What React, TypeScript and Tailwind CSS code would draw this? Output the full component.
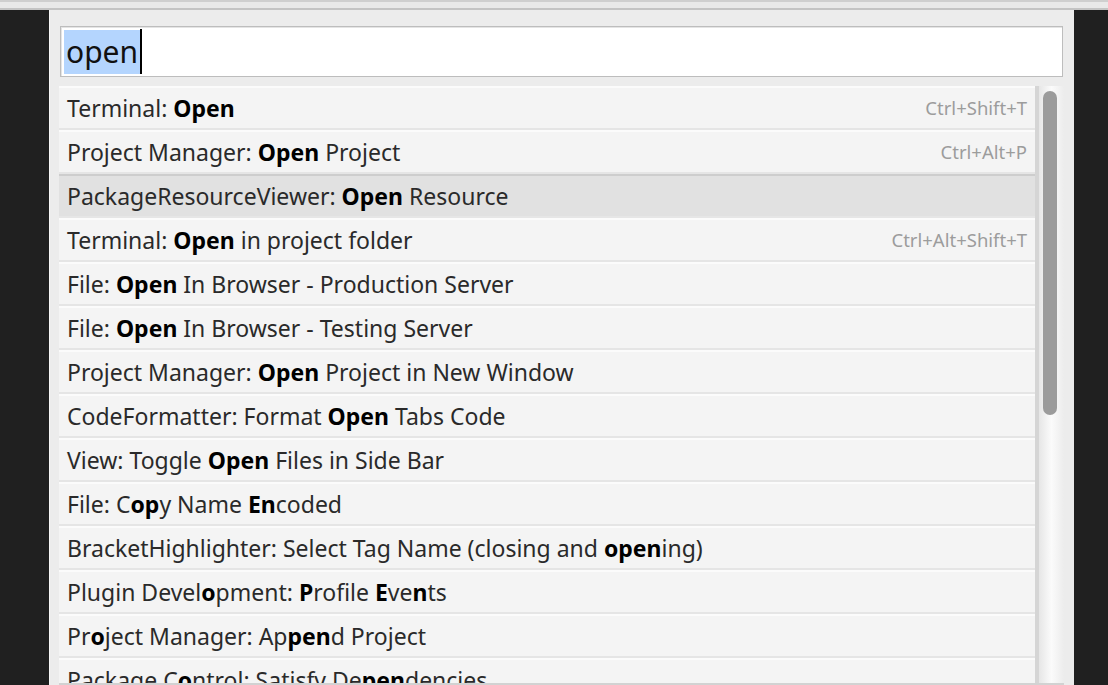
import React from 'react';

type Item = { label: string; keys?: string };

// bracketed parts are the fuzzy-match hits and render bold
const items: Item[] = [
  { label: 'Terminal: [Open]', keys: 'Ctrl+Shift+T' },
  { label: 'Project Manager: [Open] Project', keys: 'Ctrl+Alt+P' },
  { label: 'PackageResourceViewer: [Open] Resource' },
  { label: 'Terminal: [Open] in project folder', keys: 'Ctrl+Alt+Shift+T' },
  { label: 'File: [Open] In Browser - Production Server' },
  { label: 'File: [Open] In Browser - Testing Server' },
  { label: 'Project Manager: [Open] Project in New Window' },
  { label: 'CodeFormatter: Format [Open] Tabs Code' },
  { label: 'View: Toggle [Open] Files in Side Bar' },
  { label: 'File: C[op]y Name [En]coded' },
  { label: 'BracketHighlighter: Select Tag Name (closing and [open]ing)' },
  { label: 'Plugin Devel[o]pment: [P]rofile [E]ve[n]ts' },
  { label: 'Pr[o]ject Manager: Ap[pen]d Project' },
  { label: 'Package C[o]ntrol: Satisfy De[pen]dencies' },
];

const selected = 2;

function Label({ text }: { text: string }) {
  const parts = text.split(/(\[[^\]]+\])/).filter(Boolean);
  return (
    <span>
      {parts.map((p, i) =>
        p.startsWith('[') ? (
          <b key={i} className="font-bold text-black">
            {p.slice(1, -1)}
          </b>
        ) : (
          <span key={i}>{p}</span>
        ),
      )}
    </span>
  );
}

export default function App() {
  return (
    <div
      className="w-[1108px] h-[685px] overflow-hidden flex flex-col bg-[#202020]"
      style={{ fontFamily: '"Noto Sans", "Open Sans", sans-serif' }}
    >
      {/* window chrome strip */}
      <div className="h-[10px] shrink-0 bg-[#e9e9e9] border-t-[2px] border-t-[#cfcfcf] border-b-[2px] border-b-[#c4c4c4]" />

      <div className="flex flex-1 min-h-0">
        <div className="w-[49px] shrink-0" />

        <div className="w-[1025px] shrink-0 bg-[#ececec] border-l border-[#f6f6f6] flex flex-col pt-[16px] pl-[9px] pr-[9px]">
          {/* query input */}
          <div className="ml-[1px] w-[1003px] h-[51px] shrink-0 bg-white border border-[#bdbdbd] shadow-[inset_1px_1px_0_#e4e4e4] flex items-center pl-[3px]">
            <span className="bg-[#b4d5fe] text-[30px] leading-[44px] text-[#111] px-[2px]">open</span>
            <span className="w-[2px] h-[45px] bg-black" />
          </div>

          {/* result list */}
          <div className="mt-[9px] w-[1005px] flex-1 min-h-0 flex border-b-[2px] border-[#d2d2d2] overflow-hidden">
            <div className="flex-1 min-w-0 flex flex-col">
              {items.map((it, i) => (
                <div
                  key={i}
                  className={
                    i === selected
                      ? 'h-[44px] shrink-0 flex items-center justify-between pl-[8px] pr-[8px] bg-[#e1e1e1] border-t-[2px] border-t-[#cdcdcd] border-b-[2px] border-b-[#e6e6e6]'
                      : 'h-[44px] shrink-0 flex items-center justify-between pl-[8px] pr-[8px] bg-[#f4f4f4] border-t-[2px] border-t-[#fbfbfb] border-b-[2px] border-b-[#e5e5e5]'
                  }
                >
                  <span className="text-[23px] text-[#2a2a2a] whitespace-nowrap">
                    <Label text={it.label} />
                  </span>
                  {it.keys && (
                    <span className="text-[18.5px] text-[#9c9c9c] whitespace-nowrap">{it.keys}</span>
                  )}
                </div>
              ))}
            </div>

            {/* scrollbar */}
            <div className="w-[29px] shrink-0 flex border-l-[4px] border-[#d5d5d5] bg-gradient-to-r from-[#e6e6e6] via-[#fbfbfb] to-[#ececec]">
              <div className="ml-[4px] mt-[5px] w-[14px] h-[324px] rounded-full bg-[#9b9b9b]" />
            </div>
          </div>
        </div>

        <div className="flex-1" />
      </div>
    </div>
  );
}
